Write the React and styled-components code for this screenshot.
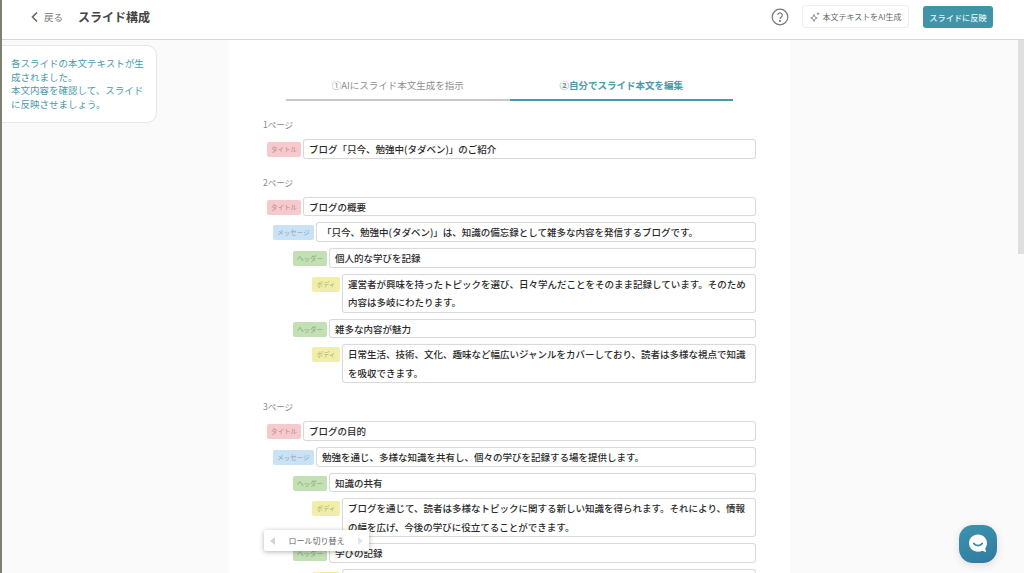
import React from 'react'
import styled, { createGlobalStyle } from 'styled-components'

const Global = createGlobalStyle`
  html, body {
    margin: 0;
    height: 100%;
    overflow: hidden;
    font-family: 'Noto Sans CJK JP', 'Noto Sans', sans-serif;
    color: #333;
  }
`

const Page = styled.div`
  height: 573px;
  display: flex;
  flex-direction: column;
  background: #fafafa;
  border-left: 2px solid #7f7f72;
  box-sizing: border-box;
  position: relative;
  overflow: hidden;
`

const Header = styled.header`
  height: 40px;
  flex: none;
  box-sizing: border-box;
  background: #fff;
  border-bottom: 1px solid #d6d6d6;
  display: flex;
  align-items: center;
  padding: 0 31px 6px 28px;
`

const Back = styled.span`
  display: flex;
  align-items: center;
  gap: 5px;
  font-size: 9.5px;
  color: #777;
  width: 48px;
`

const PageTitle = styled.h1`
  margin: 0;
  font-size: 12px;
  font-weight: 700;
  color: #444;
  flex: 1;
`

const Help = styled.span`
  margin-right: 13px;
  display: flex;
`

const GhostButton = styled.button`
  height: 23px;
  width: 107px;
  padding: 0;
  margin-right: 14px;
  display: flex;
  align-items: center;
  justify-content: center;
  gap: 3px;
  border: 1px solid #eee;
  border-radius: 3px;
  background: #fff;
  color: #666;
  font: inherit;
  font-size: 8px;
`

const PrimaryButton = styled.button`
  height: 22px;
  width: 70px;
  padding: 0;
  border: none;
  border-radius: 3px;
  background: #3f94a8;
  color: #e8f4f6;
  font: inherit;
  font-size: 8.2px;
  font-weight: 500;
`

const Body = styled.div`
  flex: 1;
  display: flex;
  min-height: 0;
`

const Side = styled.aside`
  width: 227px;
  flex: none;
  padding-top: 5px;
`

const Note = styled.div`
  width: 155px;
  box-sizing: border-box;
  padding: 11px 12px 11px 9px;
  background: #fff;
  border: 1px solid #e6e6e6;
  border-left: none;
  border-radius: 0 10px 10px 0;
  color: #4b9aa9;
  font-size: 9.5px;
  line-height: 13.5px;
`

const Main = styled.main`
  width: 561px;
  flex: none;
  box-sizing: border-box;
  background: #fff;
  padding: 29px 34px 0 34px;
`

const Tabs = styled.div`
  display: flex;
  margin: 0 23px 0 23px;
`

const Tab = styled.div`
  flex: 1;
  height: 32px;
  box-sizing: border-box;
  border-bottom: 2px solid ${p => (p.$active ? '#4b9aa9' : '#c8c8c8')};
  text-align: center;
  font-size: 9.5px;
  line-height: 32px;
  font-weight: ${p => (p.$active ? 700 : 400)};
  color: ${p => (p.$active ? '#4b9aa9' : '#8e8e8e')};
`

const Section = styled.section`
  margin-top: 18px;
`

const PageLabel = styled.div`
  font-size: 8.5px;
  line-height: 11px;
  height: 12px;
  color: #888;
  margin-bottom: 8px;
`

const Row = styled.div`
  display: flex;
  align-items: flex-start;
  gap: 2px;
  margin-bottom: 6px;
  padding-left: ${p => p.$indent}px;
`

const Tag = styled.span`
  flex: none;
  width: ${p => p.$width}px;
  margin-top: 3px;
  height: 15px;
  border-radius: 2px;
  background: ${p => p.$bg};
  color: ${p => p.$fg};
  font-size: 6.5px;
  line-height: 15px;
  text-align: center;
`

const Field = styled.div`
  flex: 1;
  min-width: 0;
  box-sizing: border-box;
  min-height: 19.7px;
  padding: ${p => (p.$multi ? '0 5px' : '1px 5px 0')};
  background: #fff;
  border: 1px solid #d9d9d9;
  border-radius: 3px;
  box-shadow: 0 0 1px rgba(0, 0, 0, 0.08);
  font-size: 9.5px;
  font-weight: 500;
  line-height: ${p => (p.$multi ? '18.4px' : '16.7px')};
  color: #2a2a2a;
  white-space: pre-wrap;
`

const Switcher = styled.div`
  position: absolute;
  left: 262px;
  top: 530px;
  width: 105px;
  height: 21px;
  box-sizing: border-box;
  padding: 0 6px;
  display: flex;
  align-items: center;
  justify-content: space-between;
  background: #fff;
  border-radius: 2px;
  box-shadow: 0 1px 5px rgba(0, 0, 0, 0.3);
  font-size: 8px;
  color: #666;
`

const Arrow = styled.span`
  width: 0;
  height: 0;
  border-top: 4px solid transparent;
  border-bottom: 4px solid transparent;
  ${p => (p.$right ? 'border-left: 5px solid #e4e4e4;' : 'border-right: 5px solid #d4d4d4;')}
`

const Scrollbar = styled.div`
  position: absolute;
  right: 0;
  top: 40px;
  width: 6px;
  height: 214px;
  background: #dfdfdf;
`

const Chat = styled.div`
  position: absolute;
  left: 957px;
  top: 525px;
  width: 38px;
  height: 38px;
  border-radius: 14px;
  background: linear-gradient(160deg, #3d94ad, #2f7aa0);
  box-shadow: 0 2px 8px rgba(0, 0, 0, 0.12);
  display: flex;
  align-items: center;
  justify-content: center;
`

const tagKinds = {
  title: { label: 'タイトル', width: 34, bg: '#f6c9cc', fg: '#b58a8c', indent: 4 },
  message: { label: 'メッセージ', width: 41, bg: '#c9e2f5', fg: '#8aa3b5', indent: 10 },
  header: { label: 'ヘッダー', width: 34, bg: '#c2e0b4', fg: '#84a276', indent: 30 },
  body: { label: 'ボディ', width: 28, bg: '#f0eeaa', fg: '#b0ae6c', indent: 49 },
}

const pages = [
  {
    label: '1ページ',
    rows: [['title', 'ブログ「只今、勉強中(タダベン)」のご紹介']],
  },
  {
    label: '2ページ',
    rows: [
      ['title', 'ブログの概要'],
      ['message', '「只今、勉強中(タダベン)」は、知識の備忘録として雑多な内容を発信するブログです。'],
      ['header', '個人的な学びを記録'],
      ['body', '運営者が興味を持ったトピックを選び、日々学んだことをそのまま記録しています。そのため内容は多岐にわたります。'],
      ['header', '雑多な内容が魅力'],
      ['body', '日常生活、技術、文化、趣味など幅広いジャンルをカバーしており、読者は多様な視点で知識を吸収できます。'],
    ],
  },
  {
    label: '3ページ',
    rows: [
      ['title', 'ブログの目的'],
      ['message', '勉強を通じ、多様な知識を共有し、個々の学びを記録する場を提供します。'],
      ['header', '知識の共有'],
      ['body', 'ブログを通じて、読者は多様なトピックに関する新しい知識を得られます。それにより、情報の幅を広げ、今後の学びに役立てることができます。'],
      ['header', '学びの記録'],
      ['body', ''],
    ],
  },
]

const App = () => (
  <Page>
    <Global />
    <Header>
      <Back>
        <svg width="9" height="12" viewBox="0 0 9 12" fill="none" stroke="#666" strokeWidth="1.6">
          <path d="M7 1.5 2.5 6 7 10.5" />
        </svg>
        戻る
      </Back>
      <PageTitle>スライド構成</PageTitle>
      <Help>
        <svg width="18" height="18" viewBox="0 0 18 18" fill="none" stroke="#777" strokeWidth="1.2">
          <circle cx="9" cy="9" r="7.8" />
          <path d="M6.7 7a2.3 2.2 0 1 1 3.6 1.9c-.8.5-1.3 1-1.3 2" />
          <circle cx="9" cy="13" r=".5" fill="#777" />
        </svg>
      </Help>
      <GhostButton>
        <svg width="10" height="10" viewBox="0 0 10 10" fill="none" stroke="#777" strokeWidth="0.8">
          <path d="M4 2.5 5 5l2.2 1L5 7l-1 2.5L3 7 .8 6 3 5Z" />
          <path d="M8 .5v2.4M6.8 1.7h2.4" />
        </svg>
        本文テキストをAI生成
      </GhostButton>
      <PrimaryButton>スライドに反映</PrimaryButton>
    </Header>
    <Body>
      <Side>
        <Note>
          各スライドの本文テキストが生成されました。
          <br />
          本文内容を確認して、スライドに反映させましょう。
        </Note>
      </Side>
      <Main>
        <Tabs>
          <Tab>①AIにスライド本文生成を指示</Tab>
          <Tab $active>②自分でスライド本文を編集</Tab>
        </Tabs>
        {pages.map(page => (
          <Section key={page.label}>
            <PageLabel>{page.label}</PageLabel>
            {page.rows.map(([kind, text], i) => {
              const tag = tagKinds[kind]
              return (
                <Row key={i} $indent={tag.indent}>
                  <Tag $width={tag.width} $bg={tag.bg} $fg={tag.fg}>{tag.label}</Tag>
                  <Field $multi={kind === 'body'}>{text}</Field>
                </Row>
              )
            })}
          </Section>
        ))}
      </Main>
    </Body>
    <Switcher>
      <Arrow />
      ロール切り替え
      <Arrow $right />
    </Switcher>
    <Scrollbar />
    <Chat>
      <svg width="24" height="24" viewBox="0 0 24 24">
        <path d="M12 2.500c5 0 9 3.700 9 8.600 0 2-.6 3.700-1.700 5.100l.8 4-3.900-1.400c-1.300.6-2.700.9-4.200.9-5 0-9-3.700-9-8.600S7 2.500 12 2.500Z" fill="#fff" />
        <path d="M7.800 11.500c1.900 2.700 6.500 2.700 8.400 0" fill="none" stroke="#3a86a6" strokeWidth="1.800" strokeLinecap="round" />
      </svg>
    </Chat>
  </Page>
)

export default App
